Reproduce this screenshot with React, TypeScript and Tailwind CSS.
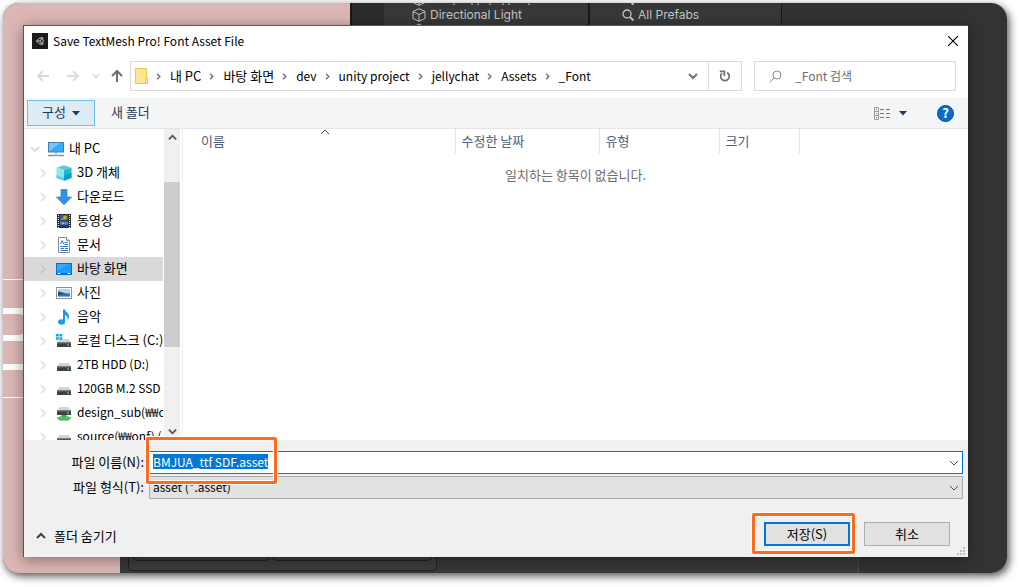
import type { ReactNode } from 'react';

type IconName = 'cube' | 'download' | 'video' | 'document' | 'desktop' | 'picture' | 'music' | 'windrive' | 'drive' | 'netdrive';

const crumbs = [
  { label: '내 PC' },
  { label: '바탕 화면' },
  { label: 'dev', latin: true },
  { label: 'unity project', latin: true },
  { label: 'jellychat', latin: true },
  { label: 'Assets', latin: true },
  { label: '_Font', latin: true },
];

const treeItems: { icon: IconName; label: string; latin?: boolean; selected?: boolean }[] = [
  { icon: 'cube', label: '3D 개체' },
  { icon: 'download', label: '다운로드' },
  { icon: 'video', label: '동영상' },
  { icon: 'document', label: '문서' },
  { icon: 'desktop', label: '바탕 화면', selected: true },
  { icon: 'picture', label: '사진' },
  { icon: 'music', label: '음악' },
  { icon: 'windrive', label: '로컬 디스크 (C:)' },
  { icon: 'drive', label: '2TB HDD (D:)', latin: true },
  { icon: 'drive', label: '120GB M.2 SSD', latin: true },
  { icon: 'netdrive', label: 'design_sub(₩₩o', latin: true },
  { icon: 'drive', label: 'source(₩₩onf) (', latin: true },
];

function Chevron({ d, w = 2, className }: { d: 'up' | 'down' | 'right'; w?: number; className?: string }) {
  const paths = { up: 'M1 7l4-4 4 4', down: 'M1 3l4 4 4-4', right: 'M3 1l4 4-4 4' };
  return (
    <svg viewBox="0 0 10 10" fill="none" stroke="currentColor" strokeWidth={w} className={className}>
      <path d={paths[d]} />
    </svg>
  );
}

function DriveShape() {
  return (
    <>
      <path d="M3.5 6h9L15 10H1z" fill="#d3d5d6" />
      <rect x="1" y="9.5" width="14" height="4.5" rx="0.6" fill="#3d4143" />
      <rect x="1" y="9.5" width="14" height="1" fill="#6d7173" />
      <rect x="11" y="11.3" width="2" height="1.4" fill="#3fe04a" />
    </>
  );
}

function TreeIcon({ name }: { name: IconName }) {
  const shapes: Record<IconName, ReactNode> = {
    cube: (
      <>
        <path d="M.5 2.8L8 .3l7.5 2.5L8 5z" fill="#5fc9cf" />
        <path d="M.5 2.8L8 5v10.8L.5 13z" fill="#8fe6ec" />
        <path d="M15.5 2.8L8 5v10.800L15.500 13z" fill="#1fb9d3" />
        <path d="M8 10.500L15.500 8v5L8 15.800z" fill="#0fa0c4" />
        <path d="M.5 10l7.500 3v2.800L.5 13z" fill="#4fcfe0" />
      </>
    ),
    download: <path d="M5 .5h6V8h4.500L8 15.800.5 8H5z" fill="#3391e3" stroke="#2476c4" strokeWidth="0.700" />,
    video: (
      <>
        <rect x="1" y="1" width="14" height="14" fill="#2c2c2c" />
        <path d="M2.500 2v13M13.500 2v13" stroke="#e8e8e8" strokeWidth="1.200" strokeDasharray="1 1" />
        <rect x="4" y="2" width="8" height="5.500" fill="#3459a8" />
        <rect x="4" y="8.500" width="8" height="5.500" fill="#4d7fd0" />
        <circle cx="9" cy="4.500" r="2" fill="#e2a12c" />
        <path d="M5 6.500l5-.5" stroke="#68b044" strokeWidth="1.300" />
        <circle cx="7" cy="10.500" r="1.200" fill="#d8b03c" />
        <path d="M4 12l3-.5 5 .5v2H4z" fill="#203c78" />
      </>
    ),
    document: (
      <>
        <path d="M2.500.5h8l3 3v12h-11z" fill="#fff" stroke="#8a8f94" />
        <path d="M10.500.5v3h3" fill="#dfe3e6" stroke="#8a8f94" />
        <path d="M4.500 7l1.700-3.500L7.700 7M8.500 5.500h3.500M8.500 7.500h3.500M4.500 9.500H12M4.500 11.500H8M9 11.500h3M4.500 13.500H12" stroke="#2e7cc0" strokeWidth="1" fill="none" />
      </>
    ),
    desktop: (
      <>
        <rect x="0.500" y="2.500" width="15" height="11" fill="#1a9cfb" stroke="#0673bf" />
        <path d="M1 10L13 3H1z" fill="#35aaff" />
        <path d="M2 12.500h2M12 12.500h2" stroke="#fff" />
        <path d="M5 12.500h6" stroke="#0d6cb3" />
      </>
    ),
    picture: (
      <>
        <rect x="0.500" y="2.500" width="15" height="11" fill="#fff" stroke="#8d9297" />
        <rect x="2" y="4" width="12" height="8" fill="#a9d7f5" />
        <path d="M2 6.500c3 0 5 2 12 2V12H2z" fill="#38719d" />
        <path d="M2 6.500c2 0 4 1.500 7 2L2 10z" fill="#2d5541" />
        <path d="M2 11h12v1H2z" fill="#7facd0" />
      </>
    ),
    music: (
      <>
        <ellipse cx="5.500" cy="13" rx="3.500" ry="2.700" fill="#1a9ceb" />
        <path d="M7 13V.5h2c.4 2.500 4.700 3.500 4 8-.3 1.400-.8 2-1.500 2.500.5-3-.5-4.200-2.500-5V13z" fill="#1a9ceb" />
      </>
    ),
    windrive: (
      <>
        <DriveShape />
        <path d="M0 1h2.800v2.500H0zM3.500 1h2.800v2.500H3.500zM0 4.200h2.800v2.500H0zM3.500 4.200h2.800v2.500H3.500z" fill="#12a5ee" />
      </>
    ),
    drive: <DriveShape />,
    netdrive: (
      <>
        <g transform="translate(0 -4)">
          <DriveShape />
        </g>
        <path d="M5.500 10h5v1.500H13V15.500H3v-4h2.500z" fill="#3fb049" />
        <path d="M1 12.300h14v2H1z" fill="#56c45e" />
      </>
    ),
  };
  return (
    <svg viewBox="0 0 16 16" className="size-4 shrink-0">
      {shapes[name]}
    </svg>
  );
}

function Highlight({ className }: { className: string }) {
  return (
    <div
      className={`pointer-events-none absolute z-10 rounded-xs border-3 border-[#ff6a1f] shadow-[0_0_0_1px_white,inset_0_0_0_1px_white] ${className}`}
    />
  );
}

// Unity editor and game view behind the dialog
function Backdrop() {
  return (
    <div className="absolute inset-0 flex flex-col bg-[#333333] font-['Inter',sans-serif] text-[12px] text-[#c4c4c4]" aria-hidden="true">
      <div className="flex h-6 shrink-0">
        <div className="w-[347px] bg-[#dcb6b4]" />
        <div className="w-[34px] border-l-2 border-[#191919] bg-[#2b2b2b]" />
        <div className="flex w-[206px] items-center gap-1 border-r-2 border-[#191919] bg-[#383838] pl-7">
          <svg viewBox="0 0 14 14" fill="none" stroke="currentColor" className="size-[14px] overflow-visible">
            <path d="M7 .7l6 2.800v7L7 13.300l-6-2.800v-7zM1 3.500l6 3 6-3M7 6.500v6.800" />
            <path d="M1-5.500L7-2.700l6-2.800M7-2.700V-6M4 17.500l3-1.400 3 1.400" />
            <path d="M42-4.500v1.500M60-4.500v1.500M66-4.500v1.500M78-4.500v1.500M91-4.500v1.500M97-4.500v1.500M117-4.500v1.500" strokeWidth="1.200" />
          </svg>
          <span>Directional Light</span>
        </div>
        <div className="flex w-[192px] items-center gap-1 border-r border-[#191919] bg-[#383838] pl-8">
          <svg viewBox="0 0 12 12" fill="none" stroke="currentColor" strokeWidth="1.300" className="size-3 overflow-visible">
            <circle cx="5" cy="5" r="4" />
            <path d="M8 8l3.500 3.500" strokeWidth="2" />
            <path d="M9.500-6l2 1.500" strokeWidth="2" />
          </svg>
          <span>All Prefabs</span>
        </div>
      </div>
      <div className="flex-1">
        <div className="flex h-full w-[117px] flex-col bg-[#dcb6b4] pt-[252px]">
          <div className="h-px bg-white" />
          <div className="mt-[28px] h-[6px] bg-white" />
          <div className="h-[21px] bg-white">
            <div className="h-full w-[22px] rounded-r-md bg-[#dcb6b4]" />
          </div>
          <div className="h-[6px] bg-white" />
          <div className="mt-[23px] h-[6px] bg-white" />
          <div className="mt-[27px] h-px bg-white" />
        </div>
      </div>
      <div className="flex h-6 shrink-0">
        <div className="w-[117px] bg-[#dcb6b4]" />
        <div className="w-[739px] border-r border-[#4a4a4a] bg-[#383838] pl-2">
          <div className="h-[22px] w-[309px] rounded-sm border border-[#222222] bg-[#3d3d3d] px-1">
            <div className="flex h-[11px]">
              <div className="w-[136px] rounded-b-sm border border-[#222222]" />
              <div className="ml-1 flex-1 rounded-b-sm border border-[#222222]" />
            </div>
          </div>
        </div>
      </div>
    </div>
  );
}

function AddressBar() {
  return (
    <div className="mt-[5px] flex h-[30px] items-center pr-[12px]">
      <div className="flex items-center pl-3 text-[#dadada]">
        <button type="button" aria-label="뒤로" className="mr-4">
          <svg viewBox="0 0 14 14" fill="none" stroke="currentColor" strokeWidth="1.800" className="size-[14px]"><path d="M13 7H2M7 2L2 7l5 5" /></svg>
        </button>
        <button type="button" aria-label="앞으로" className="mr-3">
          <svg viewBox="0 0 14 14" fill="none" stroke="currentColor" strokeWidth="1.800" className="size-[14px]"><path d="M1 7h11M7 2l5 5-5 5" /></svg>
        </button>
        <button type="button" aria-label="최근 위치" className="mr-[11px]">
          <Chevron d="down" className="size-2" />
        </button>
        <button type="button" aria-label="위로" className="mr-[7px] text-[#707070]">
          <svg viewBox="0 0 12 14" fill="none" stroke="currentColor" strokeWidth="2" className="h-[14px] w-3"><path d="M6 13V2.500M1 7l5-5 5 5" /></svg>
        </button>
      </div>
      <div className="flex h-full flex-1 items-center border border-[#d9d9d9] pl-1">
        <svg viewBox="0 0 13 16" className="h-4 w-[13px]">
          <path d="M.5.5h11v15H.5z" fill="#ffe593" stroke="#ecc64f" />
          <path d="M10.500 10.500h2v5h-2z" fill="#ffe9a6" stroke="#ecc64f" />
        </svg>
        {crumbs.map((crumb) => (
          <div key={crumb.label} className="flex items-center">
            <Chevron d="right" className="mt-px mr-2 ml-[7px] size-[7px] text-[#707070]" />
            <button type="button" className={crumb.latin ? 'text-[12px]' : ''}>{crumb.label}</button>
          </div>
        ))}
        <button type="button" aria-label="이전 위치" className="ml-auto flex h-full w-[30px] items-center justify-center text-[#707070]">
          <Chevron d="down" className="size-[10px]" />
        </button>
        <button type="button" aria-label="새로 고침" className="flex h-full w-[33px] items-center justify-center border-l border-[#d9d9d9] text-[#707070]">
          <svg viewBox="0 0 12 12" fill="none" stroke="currentColor" strokeWidth="1.700" className="size-3">
            <path d="M8 2.500A4.300 4.300 0 1 1 3 3.200" />
            <path d="M.8 1.400h4.600V6" />
          </svg>
        </button>
      </div>
      <label className="ml-3 flex h-full w-[202px] items-center border border-[#d9d9d9] pl-[14px]">
        <svg viewBox="0 0 13 13" fill="none" stroke="#8a8a8a" className="size-[13px] shrink-0">
          <circle cx="8" cy="5" r="4" />
          <path d="M5 8L.5 12.500" />
        </svg>
        <input type="search" aria-label="_Font 검색" placeholder="_Font 검색" className="ml-[13px] w-full min-w-0 text-[12px] outline-none placeholder:text-[#6d6d6d]" />
      </label>
    </div>
  );
}

function Toolbar() {
  return (
    <div className="mt-[7px] flex h-[31px] shrink-0 items-center border-b border-[#e4e6e8] bg-[#f4f5f7] pr-[14px] pl-[3px] text-[#1e395b]">
      <button type="button" className="flex h-[26px] w-[68px] items-center justify-center gap-[6px] border border-[#6fc0e6] bg-[#dcebf4]">
        <span className="pb-0.5">구성</span>
        <svg viewBox="0 0 8 5" className="h-[5px] w-2"><path d="M0 0h8L4 4.500z" fill="currentColor" /></svg>
      </button>
      <button type="button" className="ml-4 pb-0.5">새 폴더</button>
      <button type="button" aria-label="보기 변경" className="mr-[30px] ml-auto flex items-center gap-[9px]">
        <svg viewBox="0 0 16 13" fill="none" className="h-[13px] w-4">
          <path d="M.5.5h4v12h-4zM.5 4.500h4M.5 8.500h4" stroke="#9a9a9a" />
          <path d="M6 2.500h4M12 2.500h4M6 6.500h4M12 6.500h4M6 10.500h4M12 10.500h4" stroke="#777" />
          <path d="M2 2.500h1" stroke="#3a9a4a" />
          <path d="M2 6.500h1" stroke="#2f7fd5" />
          <path d="M2 10.500h1" stroke="#c33" />
        </svg>
        <svg viewBox="0 0 8 5" className="h-[5px] w-2"><path d="M0 0h8L4 4.500z" fill="currentColor" /></svg>
      </button>
      <button
        type="button"
        aria-label="도움말"
        className="flex size-[17px] items-center justify-center rounded-full border border-[#0a4c8f] bg-[#0a6cce] pb-px text-[13px] leading-none font-bold text-white"
      >
        ?
      </button>
    </div>
  );
}

function FolderTree() {
  return (
    <div className="flex w-[156px] shrink-0">
      <nav className="w-[139px] overflow-hidden pt-2 whitespace-nowrap">
        <button type="button" className="flex h-6 w-full items-center pl-[6px]">
          <Chevron d="down" w={1.5} className="mr-2 size-[10px] text-[#d0d0d0]" />
          <svg viewBox="0 0 16 16" className="mr-[5px] size-4 shrink-0">
            <rect x="0.500" y="1.500" width="15" height="9.500" fill="#37adf8" stroke="#4c7c9c" />
            <path d="M1 10.500L12 2H1z" fill="#6fc7ff" />
            <path d="M7 11h2v2H7z" fill="#9cb0bd" />
            <path d="M0 14.500h16" stroke="#8399a8" strokeWidth="1.500" />
          </svg>
          <span className="pb-0.5">내 PC</span>
        </button>
        {treeItems.map((item) => (
          <button
            key={item.label}
            type="button"
            className={`flex h-6 w-full items-center pl-[14px] ${item.selected ? 'bg-[#d9d9d9]' : ''}`}
          >
            <Chevron
              d="right"
              w={1.5}
              className={`mr-2 size-[10px] shrink-0 ${item.selected ? 'text-[#c4c4c4]' : 'text-[#e0e0e0]'}`}
            />
            <TreeIcon name={item.icon} />
            <span className={`ml-[5px] pb-0.5 ${item.latin ? 'text-[12px]' : ''}`}>{item.label}</span>
          </button>
        ))}
      </nav>
      <div className="ml-px flex flex-1 flex-col items-center bg-[#f0f0f0] text-[#505050]">
        <Chevron d="up" className="mt-1 size-[9px] shrink-0" />
        <div className="mt-[40px] h-[165px] w-full shrink-0 bg-[#cdcdcd]" />
        <Chevron d="down" className="mt-auto mb-1 size-[9px] shrink-0" />
      </div>
    </div>
  );
}

function FileList() {
  return (
    <div className="ml-[2px] flex-1 border-l border-[#f0f0f0]">
      <table className="w-full table-fixed text-left">
        <thead className="text-[#4c607a]">
          <tr className="h-[25px]">
            <th className="w-[272px] border-r border-[#e5e5e5] pb-0.5 pl-[18px] font-normal">
              <div className="relative">
                이름
                <Chevron d="up" w={1} className="absolute top-[-5px] left-[119px] size-[10px] text-[#505050]" />
              </div>
            </th>
            <th className="w-[144px] border-r border-[#e5e5e5] pb-0.5 pl-[6px] font-normal">수정한 날짜</th>
            <th className="w-[120px] border-r border-[#e5e5e5] pb-0.5 pl-[6px] font-normal">유형</th>
            <th className="w-[80px] border-r border-[#e5e5e5] pb-0.5 pl-[6px] font-normal">크기</th>
            <th />
          </tr>
        </thead>
        <tbody>
          <tr>
            <td colSpan={5} className="pt-3 text-center text-[#6d6d6d]">일치하는 항목이 없습니다.</td>
          </tr>
        </tbody>
      </table>
    </div>
  );
}

function Footer() {
  return (
    <div className="relative shrink-0 bg-[#f0f0f0] pt-[11px]">
      <div className="grid grid-cols-[120px_1fr] items-center gap-x-[5px] gap-y-[2px] pr-[5px]">
        <label htmlFor="file-name" className="pb-0.5 text-right">파일 이름(N):</label>
        <div className="relative flex h-[23px] items-center border border-[#0078d7] bg-white pl-[3px]">
          <div className="inline-grid pb-0.5 text-[12px]">
            {/* hidden copy gives the field the width of its text */}
            <span className="invisible col-start-1 row-start-1 leading-[15px]">BMJUA_ttf SDF.asset</span>
            <input
              id="file-name"
              size={1}
              defaultValue="BMJUA_ttf SDF.asset"
              className="col-start-1 row-start-1 w-full min-w-0 bg-[#0078d7] leading-[15px] text-white outline-none"
            />
          </div>
          <button type="button" aria-label="파일 이름 목록" className="mr-[3px] ml-auto text-[#505050]">
            <Chevron d="down" w={1} className="size-[10px]" />
          </button>
          <Highlight className="top-[-15px] left-[-4px] h-[47px] w-[131px]" />
        </div>
        <label htmlFor="file-type" className="pb-0.5 text-right">파일 형식(T):</label>
        <div className="relative flex h-[23px] items-center">
          <select id="file-type" className="h-full w-full appearance-none border border-[#a5abb0] bg-[#e1e2e2] pb-0.5 pl-[3px] text-[12px] leading-[18px]">
            <option>asset (*.asset)</option>
          </select>
          <Chevron d="down" w={1} className="pointer-events-none absolute right-1 size-[10px] text-[#505050]" />
        </div>
      </div>
      <div className="flex items-center pt-[23px] pr-[18px] pb-[11px] pl-3">
        <button type="button" className="mt-1 flex items-center gap-2">
          <Chevron d="up" className="size-[10px] text-[#404040]" />
          폴더 숨기기
        </button>
        <div className="relative ml-auto flex h-6 w-[86px]">
          <button type="button" className="w-full border-2 border-[#0078d7] bg-[#e1e1e1] pb-0.5 leading-none">저장(S)</button>
          <Highlight className="top-[-9px] right-[-5px] bottom-[-8px] left-[-12px]" />
        </div>
        <button type="button" className="ml-[14px] h-6 w-[86px] border border-[#adadad] bg-[#e1e1e1] pb-0.5 leading-none">취소</button>
      </div>
      <svg viewBox="0 0 8 8" className="absolute right-[3px] bottom-[2px] size-2" fill="#bdbdbd">
        <path d="M6 0h2v2H6zM3 3h2v2H3zM6 3h2v2H6zM0 6h2v2H0zM3 6h2v2H3zM6 6h2v2H6z" />
      </svg>
    </div>
  );
}

export default function App() {
  return (
    <div className="flex h-screen bg-white pt-[3px] pr-[14px] pb-[14px] pl-[3px] font-['Noto_Sans_CJK_KR',sans-serif] text-[13px] leading-[18px] text-black">
      <div className="flex flex-1 rounded-[16px] shadow-[2px_3px_9px_rgba(0,0,0,0.700)]">
        <div className="relative flex flex-1 overflow-hidden rounded-[16px]">
          <Backdrop />
          <div
            role="dialog"
            aria-label="Save TextMesh Pro! Font Asset File"
            className="relative mt-[22px] mr-[39px] mb-4 ml-5 flex min-w-0 flex-1 flex-col border-t border-l border-[#555555] bg-white shadow-[0_3px_14px_rgba(0,0,0,0.400)]"
          >
            <header className="flex h-[30px] shrink-0 items-center pr-[10px] pl-2">
              <svg viewBox="0 0 16 16" className="size-4">
                <rect width="16" height="16" fill="#1b1b1b" />
                <path d="M4.500 8l2.700-2.700 3.300-.8.800 3.500-.8 3.500-3.300-.8zM4.500 8h3.500l2.500-3.300M8 8l2.500 3.300" fill="none" stroke="#c8c8c8" />
              </svg>
              <h1 className="ml-[5px] text-[12px]">Save TextMesh Pro! Font Asset File</h1>
              <button type="button" aria-label="닫기" className="ml-auto">
                <svg viewBox="0 0 10 10" stroke="#000" strokeWidth="1.100" className="size-[10px]"><path d="M0 0l10 10M10 0L0 10" /></svg>
              </button>
            </header>
            <AddressBar />
            <Toolbar />
            <div className="flex min-h-0 flex-1">
              <FolderTree />
              <FileList />
            </div>
            <Footer />
          </div>
        </div>
      </div>
    </div>
  );
}
